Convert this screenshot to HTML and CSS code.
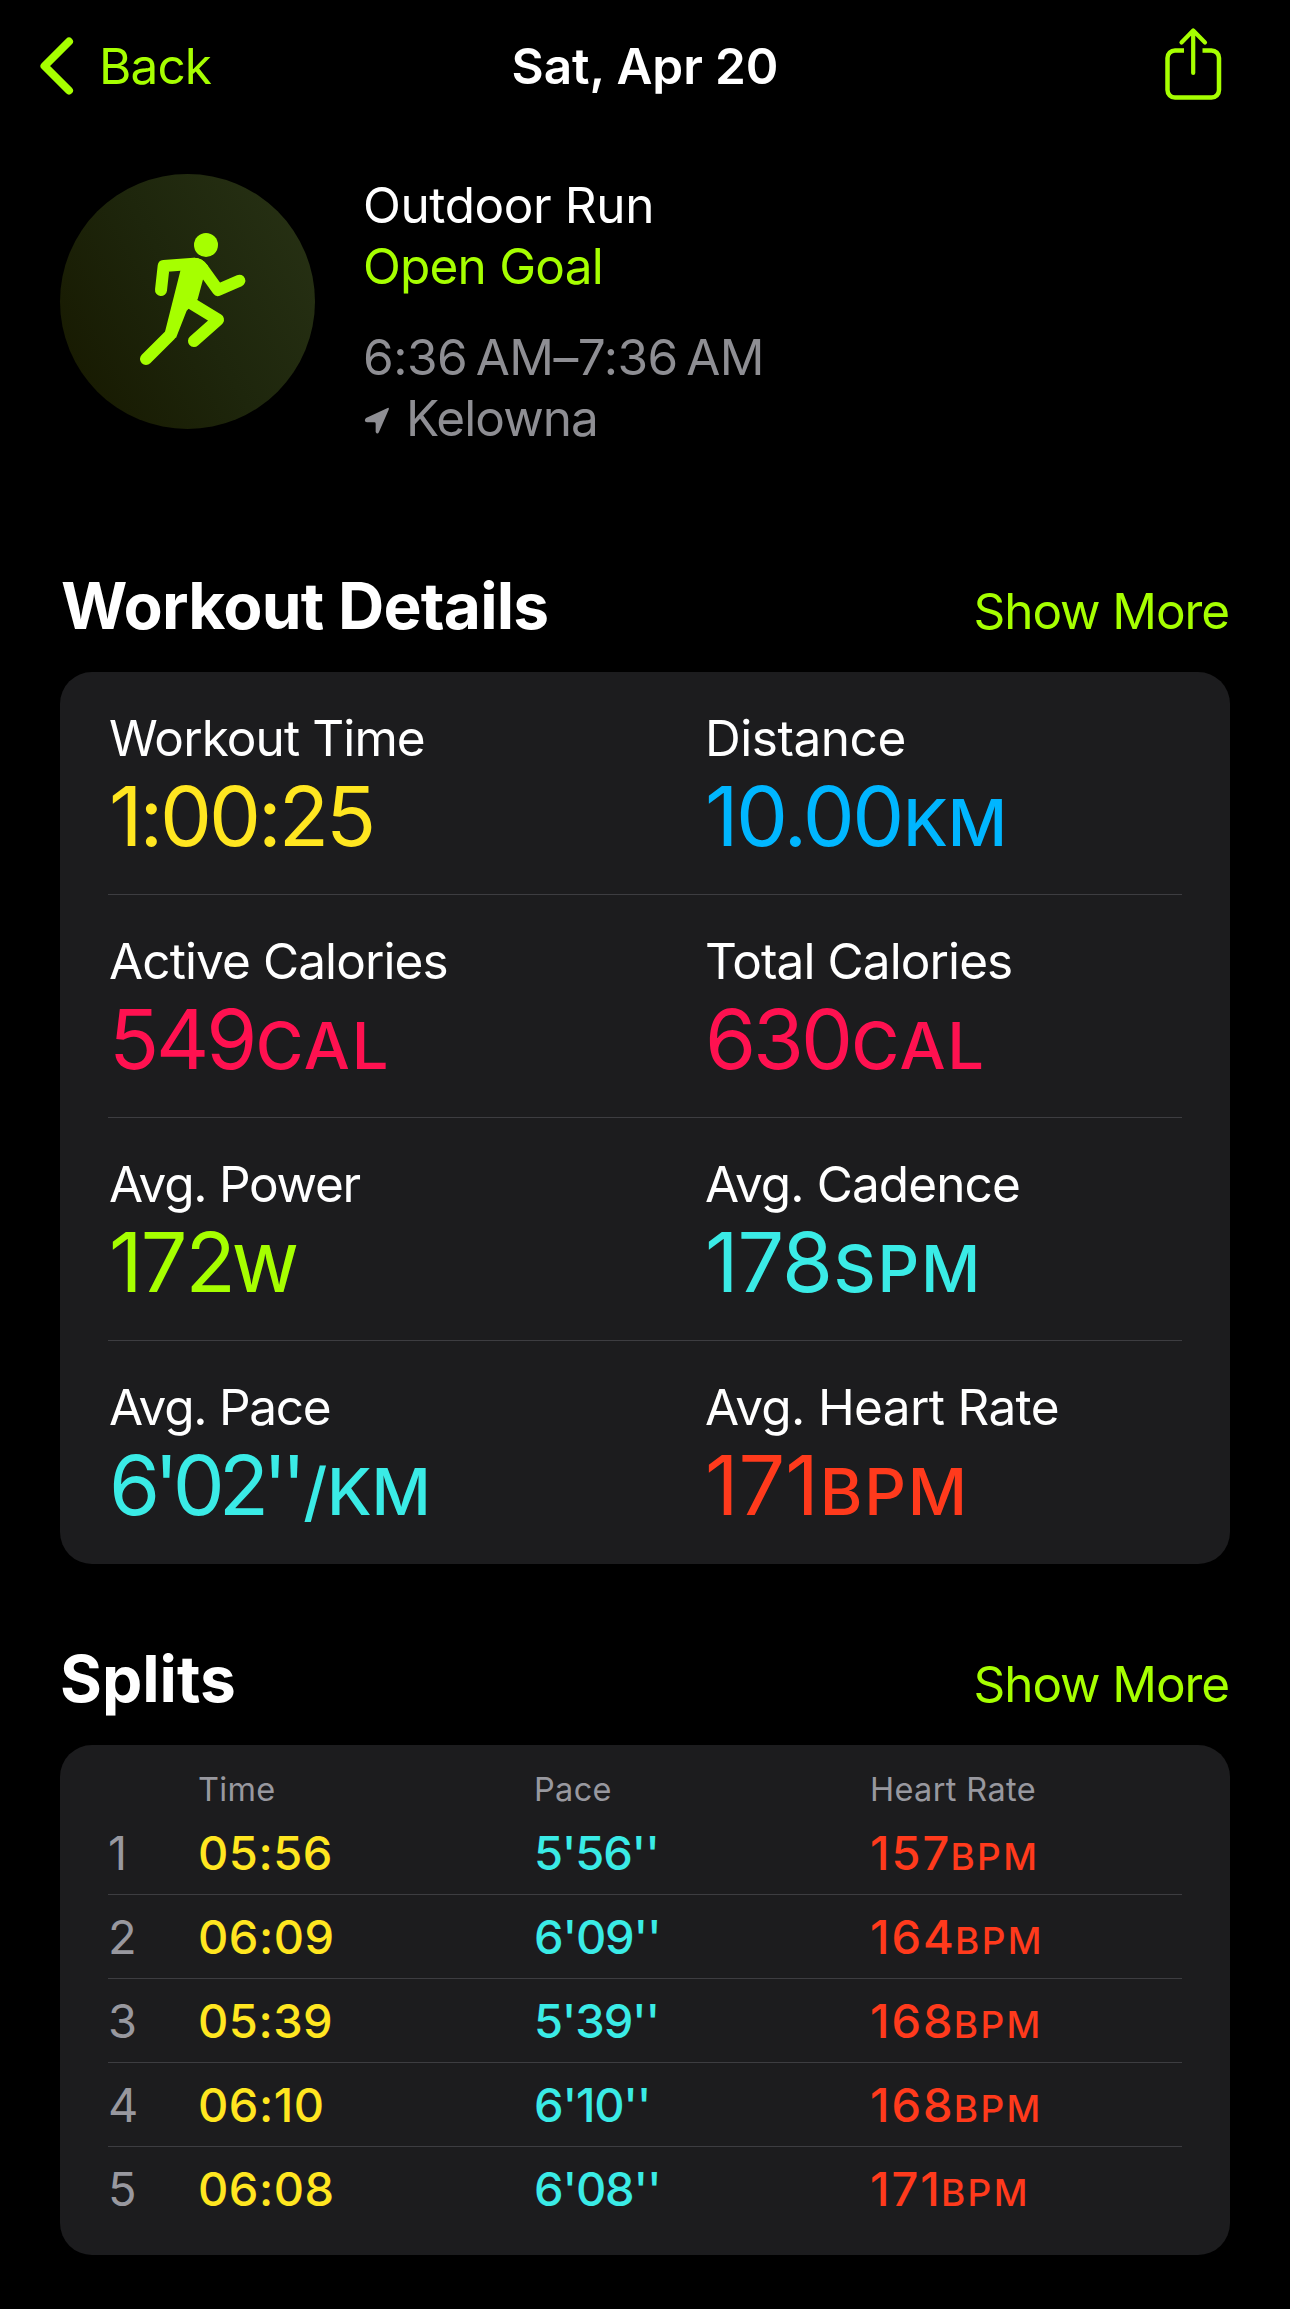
FILE: index.html
```html
<!DOCTYPE html>
<html lang="en">

<head>
    <meta charset="UTF-8">
    <title>Sat, Apr 20 - Outdoor Run</title>
    <link rel="stylesheet" href="styles.css">
</head>

<body>
    <header class="nav">
        <a class="back">
            <svg class="chevron" width="34" height="58" viewBox="0 0 34 58">
                <path d="M29 4.5 L4.5 29 L29 53.5" />
            </svg>
            <span>Back</span>
        </a>
        <h1>Sat, Apr 20</h1>
        <a class="share">
            <svg width="60" height="76" viewBox="0 0 60 76">
                <path d="M21 24.5 H12 A7.5 7.5 0 0 0 4.5 32 V64 A7.5 7.5 0 0 0 12 71.5 H48.5 A7.5 7.5 0 0 0 56 64 V32 A7.5 7.5 0 0 0 48.5 24.5 H39.5" />
                <path class="arrow" d="M30.2 5 V47 M18.5 16.5 L30.2 4.5 L42 16.5" />
            </svg>
        </a>
    </header>

    <main>
        <section class="summary">
            <div class="badge">
                <svg width="255" height="255" viewBox="30 42 765 765">
                    <circle cx="468" cy="255" r="36" />
                    <path class="body" d="M393 325 L345 515 L378 534 L410 452 L443 418 L460 355 L474 318 Q458 293 432 293 Z" />
                    <path class="limb" d="M333 390 L341 318 L432 311 Q446 311 457 325 L504 390 L568 362" />
                    <path class="limb" d="M361 524 L288 597" />
                    <path class="limb" d="M424 430 L504 479 L432 543" />
                </svg>
            </div>
            <div class="info">
                <p>Outdoor Run</p>
                <p class="goal">Open Goal</p>
                <p class="when">6:36&#8201;AM–7:36&#8201;AM</p>
                <p class="place">
                    <svg width="26" height="28" viewBox="75 740 78 84">
                        <path d="M146 743 L81 773 Q73 783 84 786 L106 786 Q110 786 110 790 L110 815 Q115 824 120 815 L149 748 Q151 741 146 743 Z" />
                    </svg>
                    <span>Kelowna</span>
                </p>
            </div>
        </section>

        <section class="details">
            <div class="section-head">
                <h2>Workout Details</h2>
                <a>Show More</a>
            </div>
            <div class="card">
                <div class="row">
                    <div class="metric time">
                        <p class="label">Workout Time</p>
                        <p class="value">1:00:25</p>
                    </div>
                    <div class="metric distance">
                        <p class="label">Distance</p>
                        <p class="value">10.00<span class="unit">KM</span></p>
                    </div>
                </div>
                <div class="row">
                    <div class="metric calories">
                        <p class="label">Active Calories</p>
                        <p class="value">549<span class="unit">CAL</span></p>
                    </div>
                    <div class="metric calories">
                        <p class="label">Total Calories</p>
                        <p class="value">630<span class="unit">CAL</span></p>
                    </div>
                </div>
                <div class="row">
                    <div class="metric power">
                        <p class="label">Avg. Power</p>
                        <p class="value">172<span class="unit">W</span></p>
                    </div>
                    <div class="metric cadence">
                        <p class="label">Avg. Cadence</p>
                        <p class="value">178<span class="unit">SPM</span></p>
                    </div>
                </div>
                <div class="row">
                    <div class="metric pace">
                        <p class="label">Avg. Pace</p>
                        <p class="value">6'02''<span class="unit">/KM</span></p>
                    </div>
                    <div class="metric heart">
                        <p class="label">Avg. Heart Rate</p>
                        <p class="value">171<span class="unit">BPM</span></p>
                    </div>
                </div>
            </div>
        </section>

        <section class="splits">
            <div class="section-head">
                <h2>Splits</h2>
                <a>Show More</a>
            </div>
            <div class="card">
                <div class="split split-head">
                    <span></span>
                    <span>Time</span>
                    <span>Pace</span>
                    <span>Heart Rate</span>
                </div>
                <div class="split">
                    <span class="num">1</span>
                    <span class="time">05:56</span>
                    <span class="pace">5'56''</span>
                    <span class="heart">157<span class="unit">BPM</span></span>
                </div>
                <div class="split">
                    <span class="num">2</span>
                    <span class="time">06:09</span>
                    <span class="pace">6'09''</span>
                    <span class="heart">164<span class="unit">BPM</span></span>
                </div>
                <div class="split">
                    <span class="num">3</span>
                    <span class="time">05:39</span>
                    <span class="pace">5'39''</span>
                    <span class="heart">168<span class="unit">BPM</span></span>
                </div>
                <div class="split">
                    <span class="num">4</span>
                    <span class="time">06:10</span>
                    <span class="pace">6'10''</span>
                    <span class="heart">168<span class="unit">BPM</span></span>
                </div>
                <div class="split">
                    <span class="num">5</span>
                    <span class="time">06:08</span>
                    <span class="pace">6'08''</span>
                    <span class="heart">171<span class="unit">BPM</span></span>
                </div>
            </div>
        </section>
    </main>
</body>

</html>
```
FILE: styles.css
```css
* {
    box-sizing: border-box;
    margin: 0;
    padding: 0;
}

body {
    background-color: #000;
    color: #fff;
    font-family: Inter, "Liberation Sans", sans-serif;
    font-size: 49.5px;
    letter-spacing: -0.9px;
}

svg {
    display: block;
}

/* top bar */
.nav {
    display: grid;
    grid-template-columns: 1fr auto 1fr;
    height: 132px;
    padding: 0 67px 0 40px;
    line-height: 132px;
    color: #a6ff00;
}

.back {
    display: flex;
    align-items: center;
    gap: 25px;
}

.chevron {
    fill: none;
    stroke: #a6ff00;
    stroke-width: 8;
    stroke-linecap: round;
    stroke-linejoin: round;
}

.nav h1 {
    font-size: 49.5px;
    font-weight: 600;
    letter-spacing: -0.1px;
    color: #fff;
    margin-left: 27px;
}

.share {
    justify-self: end;
    padding-top: 26px;
}

.share svg {
    fill: none;
    stroke: #a6ff00;
    stroke-width: 4.5;
    stroke-linecap: butt;
}

.share .arrow {
    stroke-width: 4.2;
    stroke-linecap: round;
    stroke-linejoin: round;
}

main {
    padding: 0 60px;
}

/* workout summary */
.summary {
    display: flex;
    gap: 48px;
    height: 434px;
    padding-top: 42px;
}

.badge {
    width: 255px;
    height: 255px;
    border-radius: 50%;
    background: linear-gradient(60deg, #171900 5%, #1e260c 50%, #273114 95%);
}

.badge svg {
    fill: #a6ff00;
}

.badge .limb {
    fill: none;
    stroke: #a6ff00;
    stroke-width: 36;
    stroke-linecap: round;
    stroke-linejoin: round;
}

.info {
    padding-top: 1px;
    line-height: 61px;
    letter-spacing: -0.4px;
}

.goal {
    color: #a6ff00;
    letter-spacing: -0.8px;
}

.when {
    margin-top: 30px;
    color: #8e8e93;
    letter-spacing: -0.5px;
}

.place {
    display: flex;
    gap: 16px;
    color: #8e8e93;
    letter-spacing: -0.95px;
}

.place svg {
    margin: 19px 0 0 1px;
    fill: #8e8e93;
}

/* sections */
.section-head {
    display: flex;
    justify-content: space-between;
    align-items: baseline;
    height: 106px;
    line-height: 80px;
    padding: 0 1px;
}

.section-head h2 {
    font-size: 64px;
    font-weight: 700;
    letter-spacing: -0.75px;
}

.section-head a {
    color: #a6ff00;
    letter-spacing: -1.1px;
}

.card {
    background-color: #1c1c1e;
    border-radius: 32px;
    padding: 0 48px;
}

.details {
    margin-bottom: 75px;
}

.splits .section-head h2 {
    margin-left: -1px;
    letter-spacing: 0;
}

/* metrics */
.row {
    display: grid;
    grid-template-columns: 596px 1fr;
    height: 223px;
    padding: 36px 0 0 1px;
    border-bottom: 1px solid #3d3d41;
}

.row:last-child {
    border-bottom: none;
}

.label {
    line-height: 60px;
}

.value {
    margin-top: 3px;
    font-size: 82.5px;
    line-height: 90px;
}

.unit {
    margin-left: 1.5px;
    font-size: 65px;
    font-weight: 500;
    line-height: 1;
    letter-spacing: 2px;
}

.time .value,
.split .time {
    color: #ffe620;
}

.distance .value {
    color: #00b6ff;
}

.calories .value {
    color: #ff1150;
}

.power .value {
    color: #a6ff00;
}

.cadence .value,
.pace .value,
.split .pace {
    color: #3aebe6;
}

.heart .value,
.split .heart {
    color: #ff3a1c;
}

.time .value {
    letter-spacing: -3.1px;
}

.distance .value {
    letter-spacing: -2.5px;
}

.calories .value {
    letter-spacing: -3.1px;
}

.power .value {
    letter-spacing: -1.9px;
}

.cadence .value {
    letter-spacing: -1px;
}

.pace .value {
    letter-spacing: -6.1px;
}

.heart .value {
    letter-spacing: 0;
}

.value .unit {
    letter-spacing: 1.8px;
}

.distance .unit,
.pace .unit {
    letter-spacing: -0.2px;
}

.pace .unit {
    margin-left: 3px;
}

.power .unit {
    margin-left: -1px;
}

.heart .unit {
    margin-left: 1px;
}

.distance .label {
    letter-spacing: -0.45px;
}

.power .label,
.pace .label {
    letter-spacing: -1.25px;
}

.heart .label {
    letter-spacing: -0.65px;
}

/* splits table */
.splits .card {
    height: 510px;
    padding-top: 24px;
}

.split {
    display: grid;
    grid-template-columns: 90px 336px 336px 1fr;
    height: 84px;
    line-height: 83px;
    font-size: 47px;
    font-weight: 500;
    letter-spacing: 0.5px;
    border-bottom: 1px solid #3d3d41;
}

.split:last-child {
    border-bottom: none;
}

.split-head {
    height: 42px;
    line-height: 42px;
    font-size: 32.5px;
    font-weight: 400;
    letter-spacing: 0.35px;
    color: #98989f;
    border-bottom: none;
}

.split .num {
    font-weight: 400;
    color: #98989f;
}

.split .pace {
    letter-spacing: -1.2px;
}

.split .heart {
    letter-spacing: 2px;
}

.split .unit {
    margin-left: -1px;
    font-size: 37px;
    letter-spacing: 2.4px;
}
```
